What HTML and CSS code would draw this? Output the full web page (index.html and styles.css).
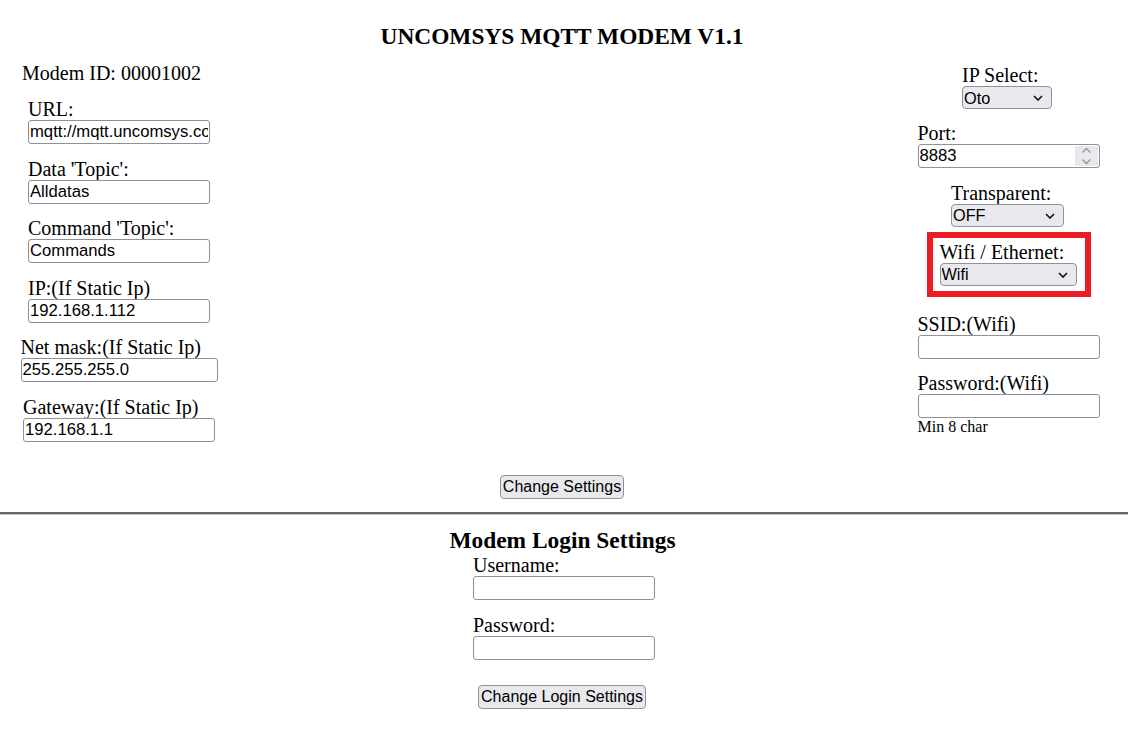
FILE: index.html
```html
<!doctype html>
<html lang="en">

<head>
    <meta charset="utf-8">
    <title>UNCOMSYS MQTT MODEM V1.1</title>
    <link rel="stylesheet" href="styles.css">
</head>

<body>
    <h3 class="title">UNCOMSYS MQTT MODEM V1.1</h3>

    <div class="columns">
        <div class="col col-left">
            <div class="modem-id">Modem ID: 00001002</div>
            <div class="field">
                <label for="url">URL:</label>
                <input class="txt" id="url" type="text" value="mqtt://mqtt.uncomsys.com">
            </div>
            <div class="field">
                <label for="topic">Data 'Topic':</label>
                <input class="txt" id="topic" type="text" value="Alldatas">
            </div>
            <div class="field">
                <label for="cmd">Command 'Topic':</label>
                <input class="txt" id="cmd" type="text" value="Commands">
            </div>
            <div class="field">
                <label for="ip">IP:(If Static Ip)</label>
                <input class="txt" id="ip" type="text" value="192.168.1.112">
            </div>
            <div class="field">
                <label for="mask">Net mask:(If Static Ip)</label>
                <input class="txt txt-mask" id="mask" type="text" value="255.255.255.0">
            </div>
            <div class="field">
                <label for="gw">Gateway:(If Static Ip)</label>
                <input class="txt txt-gw" id="gw" type="text" value="192.168.1.1">
            </div>
        </div>

        <div class="col-mid"></div>

        <div class="col col-right">
            <div class="field field-ipsel">
                <label for="ipsel">IP Select:</label>
                <span class="select-wrap">
                    <select class="sel sel-ip" id="ipsel">
                        <option>Oto</option>
                        <option>Static</option>
                    </select>
                    <svg class="chev" width="10" height="6" viewBox="0 0 10 6"><path d="M1 1l4 4 4-4" fill="none" stroke="#111" stroke-width="1.6"/></svg>
                </span>
            </div>
            <div class="field">
                <label for="port">Port:</label>
                <span class="num-wrap">
                    <input class="txt" id="port" type="text" value="8883">
                    <span class="spin">
                        <svg width="11" height="18" viewBox="0 0 11 18"><path d="M1.5 5.5l4-4 4 4M1.5 12.5l4 4 4-4" fill="none" stroke="#95959c" stroke-width="1.4"/></svg>
                    </span>
                </span>
            </div>
            <div class="field field-trans">
                <label for="trans">Transparent:</label>
                <span class="select-wrap">
                    <select class="sel sel-trans" id="trans">
                        <option>OFF</option>
                        <option>ON</option>
                    </select>
                    <svg class="chev" width="10" height="6" viewBox="0 0 10 6"><path d="M1 1l4 4 4-4" fill="none" stroke="#111" stroke-width="1.6"/></svg>
                </span>
            </div>
            <div class="highlight">
                <div class="field field-wifi">
                    <label for="net">Wifi / Ethernet:</label>
                    <span class="select-wrap">
                        <select class="sel sel-net" id="net">
                            <option>Wifi</option>
                            <option>Ethernet</option>
                        </select>
                        <svg class="chev" width="10" height="6" viewBox="0 0 10 6"><path d="M1 1l4 4 4-4" fill="none" stroke="#111" stroke-width="1.6"/></svg>
                    </span>
                </div>
            </div>
            <div class="field field-ssid">
                <label for="ssid">SSID:(Wifi)</label>
                <input class="txt" id="ssid" type="text">
            </div>
            <div class="field">
                <label for="wpass">Password:(Wifi)</label>
                <input class="txt" id="wpass" type="password">
                <span class="hint">Min 8 char</span>
            </div>
        </div>
    </div>

    <div class="actions">
        <button class="btn">Change Settings</button>
    </div>

    <hr class="sep">

    <h3 class="login-title">Modem Login Settings</h3>
    <div class="login">
        <div class="login-form">
            <div class="field">
                <label for="user">Username:</label>
                <input class="txt" id="user" type="text">
            </div>
            <div class="field">
                <label for="pass">Password:</label>
                <input class="txt" id="pass" type="password">
            </div>
        </div>
        <button class="btn btn-login">Change Login Settings</button>
    </div>
</body>

</html>
```

FILE: styles.css
```css
body {
    margin: 0;
    font-family: "Liberation Serif", "Times New Roman", serif;
    font-size: 20px;
    color: #000;
    background: #fff;
}

.title {
    margin: 23px 0 0;
    padding-right: 4px;
    font-size: 23.4px;
    line-height: 26px;
    text-align: center;
}

.columns {
    display: flex;
    margin-top: 13px;
}

.col {
    display: flex;
    flex-direction: column;
    align-items: center;
}

.col-left {
    width: 238px;
}

.col-mid {
    flex: 1;
}

.col-right {
    width: 239px;
    padding-top: 2px;
}

.modem-id {
    align-self: flex-start;
    padding-left: 22px;
    line-height: 22px;
    margin-bottom: 14px;
}

.field {
    display: flex;
    flex-direction: column;
    align-items: flex-start;
    margin-bottom: 13.6px;
}

.col .field:last-child {
    margin-bottom: 0;
}

.field label {
    line-height: 22px;
}

.txt {
    box-sizing: border-box;
    width: 182px;
    height: 24px;
    margin: 0;
    padding: 0 1px;
    border: 1px solid #8f8f9d;
    border-radius: 3px;
    background: #fff;
    font-family: "Liberation Sans", Arial, sans-serif;
    font-size: 16.67px;
    color: #000;
}

.txt-mask {
    width: 197px;
}

.txt-gw {
    width: 192px;
}

.select-wrap,
.num-wrap {
    position: relative;
    display: inline-block;
}

.sel {
    box-sizing: border-box;
    height: 23px;
    margin: 0;
    padding: 0 1px;
    border: 1px solid #8f8f9d;
    border-radius: 4px;
    background: #e9e9ed;
    font-family: "Liberation Sans", Arial, sans-serif;
    font-size: 16.3px;
    color: #000;
    appearance: none;
    -webkit-appearance: none;
    display: block;
}

.sel-ip {
    width: 90px;
}

.sel-trans {
    width: 113px;
}

.sel-net {
    width: 137px;
}

.chev {
    position: absolute;
    right: 9px;
    top: 9px;
    pointer-events: none;
}

.num-wrap .txt {
    display: block;
}

.spin {
    position: absolute;
    right: 2px;
    top: 2px;
    width: 23px;
    height: 20px;
    background: #e9e9ed;
    display: flex;
    align-items: center;
    justify-content: center;
}

.field-ipsel {
    margin-bottom: 13px;
    margin-right: 3px;
}

.field-trans {
    margin-bottom: 5px;
    margin-right: 2px;
}

.highlight {
    border: 6px solid #ed1c24;
    padding: 3px 8px 5px 7px;
    margin-bottom: 16px;
}

.field-wifi {
    margin-bottom: 0;
}

.hint {
    font-size: 16px;
    line-height: 18px;
}

.btn {
    box-sizing: border-box;
    height: 24px;
    margin: 0;
    padding: 0 2px;
    border: 1px solid #8f8f9d;
    border-radius: 4px;
    background: #e9e9ed;
    font-family: "Liberation Sans", Arial, sans-serif;
    font-size: 16px;
    color: #000;
}

.actions {
    margin-top: 32px;
    padding-right: 4px;
    text-align: center;
}

.sep {
    margin: 13px 0 0;
    height: 0;
    border: 0;
    border-top: 2px solid #676767;
    border-bottom: 1px solid #c4c4c4;
}

.login-title {
    margin: 12px 0 0;
    padding-right: 3px;
    font-size: 23.4px;
    line-height: 26px;
    text-align: center;
}

.login {
    display: flex;
    flex-direction: column;
    align-items: center;
    margin-top: 1px;
}

.login-form {
    display: flex;
    flex-direction: column;
}

.login-form .field:last-child {
    margin-bottom: 25px;
}

.btn-login {
    margin-right: 4px;
}
```
